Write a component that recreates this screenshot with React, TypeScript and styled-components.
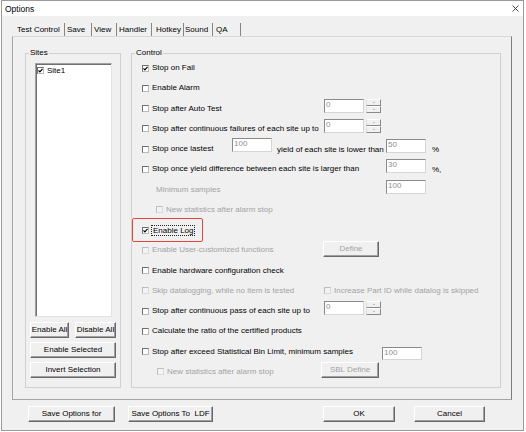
import React from "react";
import styled, { createGlobalStyle } from "styled-components";

const Global = createGlobalStyle`
  html, body { margin: 0; padding: 0; background: #ffffff; }
  body {
    font-family: "Liberation Sans", Arial, sans-serif;
    font-size: 8px;
    color: #000;
  }
  * { box-sizing: border-box; }
`;

const Window = styled.div`
  margin-left: 1px;
  width: 523px;
  height: 431px;
  border: 1px solid #9a9a9a;
  background: #f0f0f0;
  display: flex;
  flex-direction: column;
`;

const TitleBar = styled.div`
  height: 15px;
  flex: none;
  background: #ffffff;
  display: flex;
  align-items: center;
  justify-content: space-between;
  padding: 0 4px 0 3px;
  font-size: 8.5px;
  color: #000;
`;

const Body = styled.div`
  flex: 1;
  display: flex;
  flex-direction: column;
  padding: 4px 10px 0 10px;
`;

const TabsRow = styled.div`
  display: flex;
  align-items: flex-end;
  height: 16px;
  margin-left: 3px;
`;

const Tab = styled.div<{ $w: number; $pl: number }>`
  width: ${(p) => p.$w}px;
  height: 13px;
  line-height: 13px;
  padding-left: ${(p) => p.$pl}px;
  border-right: 1px solid #858585;
  white-space: nowrap;
`;

const Panel = styled.div`
  width: 500px;
  height: 364px;
  flex: none;
  display: flex;
  gap: 10px;
  padding: 16px 10px 11px 12px;
  border: 1px solid #a5a5a5;
  border-top-color: #d8d8d8;
  border-right-color: #7c7c7c;
`;

const Group = styled.div<{ $w: number }>`
  position: relative;
  width: ${(p) => p.$w}px;
  flex: none;
  border: 1px solid #d0d0d0;
  display: flex;
  flex-direction: column;
`;

const Legend = styled.span`
  position: absolute;
  left: 3px;
  top: -6px;
  line-height: 10px;
  padding: 0 1px;
  background: #f0f0f0;
`;

const SitesGroup = styled(Group)`
  padding: 9px 4px 9px 4px;
`;

const ControlGroup = styled(Group)`
  padding: 4px 0 0 10px;
`;

const ListBox = styled.div`
  flex: 1;
  margin: 0 4px 0 5px;
  background: #ffffff;
  border: 1px solid;
  border-color: #a0a0a0 #e3e3e3 #e3e3e3 #a0a0a0;
  box-shadow: inset 1px 1px 0 #707070;
  padding: 1px 0 0 1px;
`;

const ListItem = styled.div`
  display: flex;
  align-items: center;
  gap: 3px;
  height: 9px;
  margin-top: 1px;
`;

const ButtonPair = styled.div`
  display: flex;
  gap: 6px;
  margin-top: 5px;
`;

const Push = styled.button<{ $w?: number; $h?: number; $mt?: number; $off?: boolean }>`
  font-family: inherit;
  font-size: 8px;
  width: ${(p) => (p.$w ? `${p.$w}px` : "auto")};
  height: ${(p) => p.$h ?? 16}px;
  margin-top: ${(p) => p.$mt ?? 0}px;
  align-self: flex-start;
  flex: none;
  padding: 0;
  background: #f0f0f0;
  border: 1px solid;
  border-color: #ffffff #696969 #696969 #ffffff;
  box-shadow: inset -1px -1px 0 #a0a0a0;
  color: ${(p) => (p.$off ? "#a3a3a3" : "#000")};
  white-space: pre;
  line-height: 12px;
`;

const WideButton = styled(Push)`
  margin-top: 4px;
  width: 100%;
`;

const Row = styled.div`
  position: relative;
  height: 20.25px;
  flex: none;
  display: flex;
  align-items: center;
`;

const Lead = styled.div<{ $w?: number; $indent?: number }>`
  display: flex;
  align-items: center;
  gap: 3px;
  flex: none;
  width: ${(p) => (p.$w ? `${p.$w}px` : "auto")};
  padding-left: ${(p) => p.$indent ?? 0}px;
  white-space: nowrap;
`;

const Box = styled.span<{ $off?: boolean }>`
  width: 7px;
  height: 7px;
  flex: none;
  display: flex;
  align-items: center;
  justify-content: center;
  border: 1px solid;
  border-color: ${(p) =>
    p.$off ? "#bdbdbd #dadada #dadada #bdbdbd" : "#6f6f6f #b9b9b9 #b9b9b9 #6f6f6f"};
  background: ${(p) => (p.$off ? "#f3f3f3" : "#ffffff")};
`;

const Label = styled.span<{ $off?: boolean }>`
  color: ${(p) => (p.$off ? "#a3a3a3" : "#000")};
  line-height: 10px;
`;

const FocusLabel = styled.span`
  margin-left: -1px;
  border: 1px dotted #222;
  padding: 0 1px;
  line-height: 9px;
`;

const Highlight = styled.span`
  position: absolute;
  left: -10px;
  top: -2px;
  width: 71px;
  height: 24px;
  border: 1.5px solid #e5433b;
  border-radius: 2px;
  pointer-events: none;
`;

const Field = styled.div<{ $mt?: number; $h?: number }>`
  width: 40px;
  height: ${(p) => p.$h ?? 14}px;
  flex: none;
  align-self: flex-start;
  margin-top: ${(p) => p.$mt ?? 0}px;
  background: #ffffff;
  border: 1px solid;
  border-color: #8a8a8a #d6d6d6 #d6d6d6 #8a8a8a;
  color: #8e8e8e;
  padding-left: 1px;
  line-height: 10px;
`;

const MidText = styled.span<{ $w: number }>`
  width: ${(p) => p.$w}px;
  margin-left: 5px;
  flex: none;
  white-space: nowrap;
`;

const Suffix = styled.span`
  margin-left: 6px;
`;

const Spin = styled.div`
  width: 15px;
  height: 14px;
  margin-left: 2px;
  flex: none;
  align-self: flex-start;
  display: flex;
  flex-direction: column;
`;

const SpinHalf = styled.div`
  flex: 1;
  display: flex;
  align-items: center;
  justify-content: center;
  background: #f0f0f0;
  border: 1px solid;
  border-color: #ffffff #8a8a8a #8a8a8a #e0e0e0;
`;

const Arrow = styled.span<{ $down?: boolean }>`
  width: 0;
  height: 0;
  border-left: 1.5px solid transparent;
  border-right: 1.5px solid transparent;
  ${(p) =>
    p.$down ? "border-top: 1.5px solid #8a8a8a;" : "border-bottom: 1.5px solid #8a8a8a;"}
`;

const BottomBar = styled.div`
  display: flex;
  align-items: flex-start;
  margin-top: 6px;
  padding: 0 28px 0 16px;
`;

const Spacer = styled.div`
  flex: 1;
`;

const CheckMark = () => (
  <svg width="5" height="5" viewBox="0 0 5 5">
    <path d="M0.5 2.3 L1.9 3.8 L4.5 0.9" fill="none" stroke="#000" strokeWidth="1.2" />
  </svg>
);

const CloseIcon = () => (
  <svg width="7" height="7" viewBox="0 0 7 7">
    <path d="M0.5 0.5 L6.5 6.5 M6.5 0.5 L0.5 6.5" stroke="#333" strokeWidth="0.9" />
  </svg>
);

type CkProps = {
  label: string;
  checked?: boolean;
  off?: boolean;
  w?: number;
  indent?: number;
  focus?: boolean;
};

const Ck = ({ label, checked, off, w, indent, focus }: CkProps) => (
  <Lead $w={w} $indent={indent}>
    <Box $off={off}>{checked && <CheckMark />}</Box>
    {focus ? <FocusLabel>{label}</FocusLabel> : <Label $off={off}>{label}</Label>}
  </Lead>
);

const Spinner = ({ value }: { value: string }) => (
  <>
    <Field>{value}</Field>
    <Spin>
      <SpinHalf>
        <Arrow />
      </SpinHalf>
      <SpinHalf>
        <Arrow $down />
      </SpinHalf>
    </Spin>
  </>
);

const tabs = [
  { name: "Test Control", w: 50, pl: 2 },
  { name: "Save", w: 27, pl: 2 },
  { name: "View", w: 25, pl: 2 },
  { name: "Handler", w: 35, pl: 2 },
  { name: "Hotkey", w: 32, pl: 4 },
  { name: "Sound", w: 29, pl: 1 },
  { name: "QA", w: 28, pl: 3 },
];

export default function App() {
  return (
    <>
      <Global />
      <Window>
        <TitleBar>
          <span>Options</span>
          <CloseIcon />
        </TitleBar>
        <Body>
          <TabsRow>
            {tabs.map((t) => (
              <Tab key={t.name} $w={t.w} $pl={t.pl}>
                {t.name}
              </Tab>
            ))}
          </TabsRow>
          <Panel>
            <SitesGroup $w={96}>
              <Legend>Sites</Legend>
              <ListBox>
                <ListItem>
                  <Box>
                    <CheckMark />
                  </Box>
                  <Label>Site1</Label>
                </ListItem>
              </ListBox>
              <ButtonPair>
                <Push $w={39}>Enable All</Push>
                <Push $w={41}>Disable All</Push>
              </ButtonPair>
              <WideButton>Enable Selected</WideButton>
              <WideButton>Invert Selection</WideButton>
            </SitesGroup>
            <ControlGroup $w={370}>
              <Legend>Control</Legend>
              <Row>
                <Ck label="Stop on Fail" checked />
              </Row>
              <Row>
                <Ck label="Enable Alarm" />
              </Row>
              <Row>
                <Ck label="Stop after Auto Test" w={182} />
                <Spinner value="0" />
              </Row>
              <Row>
                <Ck label="Stop after continuous failures of each site up to" w={182} />
                <Spinner value="0" />
              </Row>
              <Row>
                <Ck label="Stop once lastest" w={90} />
                <Field $mt={-1}>100</Field>
                <MidText $w={109}>yield of each site is lower than</MidText>
                <Field>50</Field>
                <Suffix>%</Suffix>
              </Row>
              <Row>
                <Ck label="Stop once yield difference between each site is larger than" w={244} />
                <Field>30</Field>
                <Suffix>%,</Suffix>
              </Row>
              <Row>
                <Lead $w={244} $indent={14}>
                  <Label $off>Minimum samples</Label>
                </Lead>
                <Field>100</Field>
              </Row>
              <Row>
                <Ck label="New statistics after alarm stop" off indent={14} />
              </Row>
              <Row>
                <Ck label="Enable Log" checked focus />
                <Highlight />
              </Row>
              <Row>
                <Ck label="Enable User-customized functions" off w={181} />
                <Push $w={56} $mt={1} $off>
                  Define
                </Push>
              </Row>
              <Row>
                <Ck label="Enable hardware configuration check" />
              </Row>
              <Row>
                <Ck label="Skip datalogging, while no item is tested" off w={182} />
                <Ck label="Increase Part ID while datalog is skipped" off />
              </Row>
              <Row>
                <Ck label="Stop after continuous pass of each site up to" w={182} />
                <Spinner value="0" />
              </Row>
              <Row>
                <Ck label="Calculate the ratio of the certified products" />
              </Row>
              <Row>
                <Ck label="Stop after exceed Statistical Bin Limit, minimum samples" w={240} />
                <Field $mt={5} $h={13}>
                  100
                </Field>
              </Row>
              <Row>
                <Ck label="New statistics after alarm stop" off indent={15} w={179} />
                <Push $w={58} $off>
                  SBL Define
                </Push>
              </Row>
            </ControlGroup>
          </Panel>
          <BottomBar>
            <Push $w={87}>Save Options for</Push>
            <Push $w={85} style={{ marginLeft: 13 }}>
              {"Save Options To  LDF"}
            </Push>
            <Spacer />
            <Push $w={72}>OK</Push>
            <Push $w={71} style={{ marginLeft: 19 }}>
              Cancel
            </Push>
          </BottomBar>
        </Body>
      </Window>
    </>
  );
}
